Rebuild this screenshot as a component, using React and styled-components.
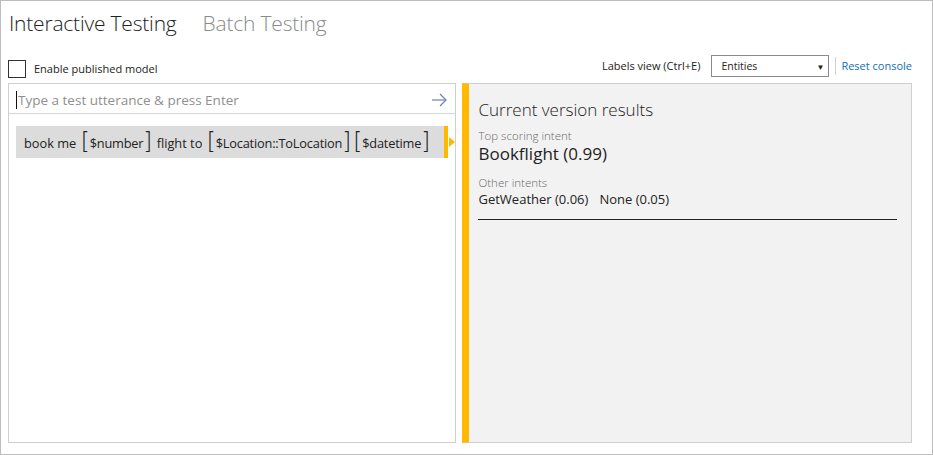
import React from 'react';
import styled, { createGlobalStyle } from 'styled-components';

const GlobalStyle = createGlobalStyle`
  body {
    margin: 0;
    background: #fff;
    font-family: "Open Sans", "Liberation Sans", sans-serif;
    color: #222;
  }
  * { box-sizing: border-box; }
`;

const Frame = styled.div`
  width: 933px;
  height: 455px;
  border: 1px solid #bdbdbd;
  padding: 0 20px 0 7px;
  display: flex;
  flex-direction: column;
`;

const Tabs = styled.div`
  display: flex;
  gap: 26px;
  padding: 8px 0 0 1px;
  height: 48px;
`;

const Tab = styled.div`
  font-size: 21px;
  font-weight: 300;
  letter-spacing: -0.2px;
  color: ${p => (p.$active ? '#222' : '#8a8a8a')};
`;

const Toolbar = styled.div`
  display: flex;
  align-items: center;
  justify-content: space-between;
  height: 34px;
  padding-bottom: 2px;
`;

const CheckLabel = styled.label`
  display: flex;
  align-items: center;
  gap: 8px;
  font-size: 11px;
  color: #222;
  padding-top: 7px;
`;

const CheckBox = styled.span`
  width: 18px;
  height: 18px;
  border: 1px solid #333;
  background: #fff;
`;

const Controls = styled.div`
  display: flex;
  align-items: center;
  font-size: 11px;
  margin-top: 1px;
`;

const SelectBox = styled.div`
  width: 118px;
  height: 22px;
  margin-left: 11px;
  border: 1px solid #8a8a8a;
  display: flex;
  align-items: center;
  justify-content: space-between;
  padding: 1px 4px 0 9px;
  font-size: 10.5px;
  background: #fff;
`;

const Caret = styled.span`
  font-size: 8px;
  color: #222;
`;

const Divider = styled.span`
  width: 1px;
  height: 18px;
  background: #d0d0d0;
  margin: 0 5px 0 6px;
`;

const LinkText = styled.a`
  color: #106ebe;
  text-decoration: none;
`;

const Panels = styled.div`
  display: flex;
  gap: 6px;
  height: 360px;
`;

const LeftPanel = styled.div`
  width: 449px;
  border: 1px solid #cfcfcf;
  display: flex;
  flex-direction: column;
`;

const InputRow = styled.div`
  height: 30px;
  border-bottom: 1px solid #d6d6d6;
  display: flex;
  align-items: center;
  padding: 2px 8px 0 7px;
`;

const TextCaret = styled.span`
  width: 1px;
  height: 18px;
  background: #111;
  margin-right: 1px;
`;

const Placeholder = styled.span`
  flex: 1;
  font-size: 13.5px;
  color: #8f8f8f;
  margin-top: 1px;
`;

const Utterances = styled.div`
  padding: 12px 7px 0;
`;

const Utterance = styled.div`
  position: relative;
  height: 32px;
  background: #dcdcdc;
  border-right: 4px solid #ffb900;
  display: flex;
  align-items: center;
  padding: 1px 0 0 8px;
  font-size: 12.8px;
  color: #222;
  white-space: pre;

  &::after {
    content: '';
    position: absolute;
    right: -11px;
    top: 11px;
    border-left: 6px solid #ffb900;
    border-top: 5px solid transparent;
    border-bottom: 5px solid transparent;
  }
`;

const Entity = styled.span`
  display: inline-flex;
  align-items: center;
  letter-spacing: -0.2px;
  margin: 0 1px;

  &::before, &::after {
    font-family: "DejaVu Sans", sans-serif;
    font-size: 23px;
    font-weight: 200;
    line-height: 1;
    margin-top: -3px;
    letter-spacing: 0;
  }
  &::before { content: '['; }
  &::after { content: ']'; }
`;

const RightPanel = styled.div`
  width: 450px;
  background: #f2f2f2;
  border: 1px solid #cfcfcf;
  border-left: 7px solid #ffb900;
  padding: 14px 14px 0 9px;
`;

const ResultsTitle = styled.div`
  font-size: 17px;
  font-weight: 300;
  color: #222;
  margin-bottom: 8px;
`;

const SmallLabel = styled.div`
  font-size: 11.5px;
  font-weight: 300;
  color: #6a6a6a;
  line-height: 14px;
`;

const Intent = styled.div`
  font-size: 17px;
  color: #222;
  line-height: 22px;
  margin-bottom: 11px;
`;

const OtherIntents = styled.div`
  display: flex;
  gap: 11px;
  font-size: 13px;
  color: #222;
  line-height: 18px;
  padding: 0 0 11px;
  border-bottom: 1px solid #222;
`;

function ArrowIcon() {
  return (
    <svg width="16" height="14" viewBox="0 0 16 14" fill="none" stroke="#6f7fb8" strokeWidth="1.2">
      <path d="M1 7 H15" />
      <path d="M9 1 L15 7 L9 13" />
    </svg>
  );
}

export default function App() {
  return (
    <>
      <GlobalStyle />
      <Frame>
        <Tabs>
          <Tab $active>Interactive Testing</Tab>
          <Tab>Batch Testing</Tab>
        </Tabs>
        <Toolbar>
          <CheckLabel>
            <CheckBox />
            Enable published model
          </CheckLabel>
          <Controls>
            Labels view (Ctrl+E)
            <SelectBox>
              Entities
              <Caret>▼</Caret>
            </SelectBox>
            <Divider />
            <LinkText href="#">Reset console</LinkText>
          </Controls>
        </Toolbar>
        <Panels>
          <LeftPanel>
            <InputRow>
              <TextCaret />
              <Placeholder>Type a test utterance &amp; press Enter</Placeholder>
              <ArrowIcon />
            </InputRow>
            <Utterances>
              <Utterance>
                {'book me '}
                <Entity>$number</Entity>
                {' flight to '}
                <Entity>$Location::ToLocation</Entity>
                {' '}
                <Entity>$datetime</Entity>
              </Utterance>
            </Utterances>
          </LeftPanel>
          <RightPanel>
            <ResultsTitle>Current version results</ResultsTitle>
            <SmallLabel>Top scoring intent</SmallLabel>
            <Intent>Bookflight (0.99)</Intent>
            <SmallLabel>Other intents</SmallLabel>
            <OtherIntents>
              <span>GetWeather (0.06)</span>
              <span>None (0.05)</span>
            </OtherIntents>
          </RightPanel>
        </Panels>
      </Frame>
    </>
  );
}
